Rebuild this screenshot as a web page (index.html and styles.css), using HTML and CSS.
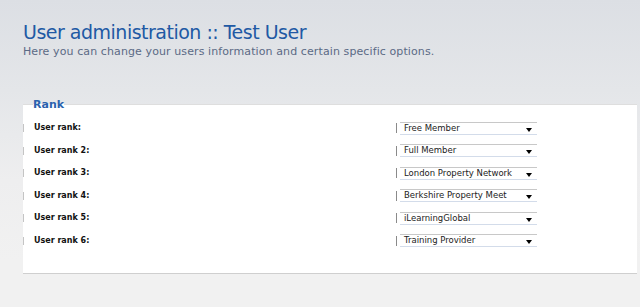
FILE: index.html
```html
<!DOCTYPE html>
<html lang="en">
<head>
    <meta charset="UTF-8">
    <title>User administration :: Test User</title>
    <link rel="stylesheet" href="styles.css">
</head>
<body>

    <div class="page-header">
        <h1>User administration :: Test User</h1>
        <p>Here you can change your users information and certain specific options.</p>
    </div>

    <fieldset class="panel">
        <legend>Rank</legend>

        <div class="row">
            <label>User rank:</label>
            <div class="field"><span class="select">Free Member<i class="arrow"></i></span></div>
        </div>
        <div class="row">
            <label>User rank 2:</label>
            <div class="field"><span class="select">Full Member<i class="arrow"></i></span></div>
        </div>
        <div class="row">
            <label>User rank 3:</label>
            <div class="field"><span class="select">London Property Network<i class="arrow"></i></span></div>
        </div>
        <div class="row">
            <label>User rank 4:</label>
            <div class="field"><span class="select">Berkshire Property Meet<i class="arrow"></i></span></div>
        </div>
        <div class="row">
            <label>User rank 5:</label>
            <div class="field"><span class="select">iLearningGlobal<i class="arrow"></i></span></div>
        </div>
        <div class="row">
            <label>User rank 6:</label>
            <div class="field"><span class="select">Training Provider<i class="arrow"></i></span></div>
        </div>
    </fieldset>

</body>
</html>
```

FILE: styles.css
```css
html, body {
    height: 100%;
}
body {
    margin: 0;
    padding: 0 3px 0 23px;
    font-family: "DejaVu Sans", Verdana, sans-serif;
    background: linear-gradient(to bottom, #dcdfe4 0px, #e4e6e9 90px, #eeeeef 180px, #f1f1f1 260px);
}
.page-header h1 {
    margin: 0;
    padding-top: 20px;
    font-size: 19px;
    font-weight: normal;
    line-height: 24px;
    color: #2159a4;
    letter-spacing: -0.5px;
}
.page-header p {
    margin: 1px 0 0 0;
    font-size: 11px;
    line-height: 14px;
    color: #5b6a85;
    letter-spacing: 0.1px;
}
.panel {
    margin: 39px 0 0 0;
    padding: 6px 0 21px 0;
    border: 0;
    border-top: 1px solid #dedede;
    border-bottom: 1px solid #cfcfcf;
    background-color: #fff;
    min-width: 0;
}
.panel legend {
    margin-left: 10px;
    padding: 0;
    font-size: 11px;
    font-weight: bold;
    color: #2b62ae;
}
.row {
    display: flex;
    align-items: center;
    height: 22.5px;
}
.row label {
    width: 362px;
    padding-left: 10px;
    border-left: 1px solid #c4c4c4;
    font-size: 8px;
    font-weight: bold;
    line-height: 8px;
    color: #111;
}
.field {
    display: flex;
    align-items: center;
    padding-left: 3px;
    border-left: 1px solid #8a8a8a;
    height: 10px;
}
.select {
    position: relative;
    display: block;
    width: 133px;
    height: 11px;
    padding-left: 4px;
    border-top: 1px solid #c8c8c8;
    border-bottom: 1px solid #d3dcea;
    font-size: 8.5px;
    line-height: 11px;
    color: #222;
    white-space: nowrap;
}
.arrow {
    position: absolute;
    right: 5px;
    top: 5px;
    width: 0;
    height: 0;
    border-left: 3px solid transparent;
    border-right: 3px solid transparent;
    border-top: 4px solid #000;
}
```
